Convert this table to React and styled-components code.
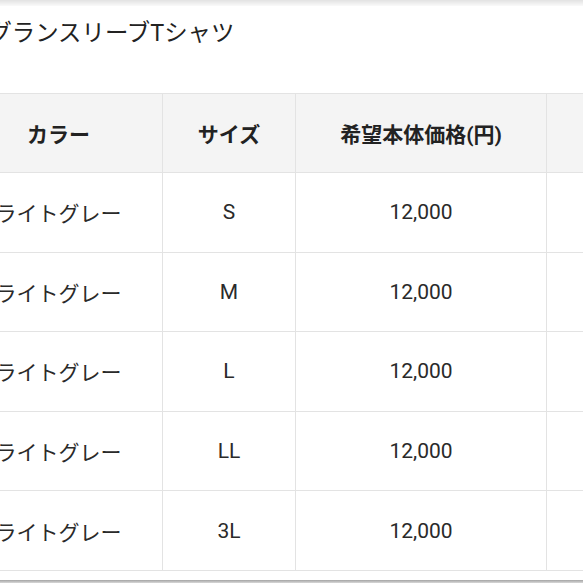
import React from "react";
import styled, { createGlobalStyle } from "styled-components";

const GlobalStyle = createGlobalStyle`
  html, body {
    margin: 0;
    padding: 0;
    background: #fff;
    overflow: hidden;
  }
  body {
    font-family: "Roboto", "Noto Sans CJK JP", sans-serif;
    color: #222;
  }
`;

const Page = styled.div`
  width: 583px;
  height: 583px;
  display: flex;
  flex-direction: column;
  overflow: hidden;
`;

const TopShade = styled.div`
  height: 6px;
  flex-shrink: 0;
  background: linear-gradient(#e2e2e2, #fafafa);
`;

const Title = styled.h1`
  margin: 0 0 0 -35px;
  height: 87px;
  flex-shrink: 0;
  font-size: 23.4px;
  font-weight: 400;
  line-height: 1;
  padding-top: 16px;
  box-sizing: border-box;
  color: #222;
  white-space: nowrap;
`;

const Table = styled.table`
  margin-left: -46px;
  border-collapse: collapse;
  table-layout: fixed;
  width: 712px;
  flex-shrink: 0;

  th, td {
    border: 1px solid #e3e3e3;
    text-align: center;
    font-size: 21px;
    padding: 0;
  }
`;

const HeadCell = styled.th`
  height: 78px;
  background: #f4f4f4;
  font-weight: 700;
  color: #222;
`;

const Cell = styled.td`
  height: 78.6px;
  font-weight: 400;
  color: #2a2a2a;
`;

const BottomBar = styled.div`
  margin-top: auto;
  height: 3px;
  background: linear-gradient(#a4a4a4, #d8d8d8);
`;

const rows = ["S", "M", "L", "LL", "3L"];

export default function App() {
  return (
    <>
      <GlobalStyle />
      <Page>
        <TopShade />
        <Title>ラグランスリーブTシャツ</Title>
        <Table>
          <colgroup>
            <col style={{ width: 208 }} />
            <col style={{ width: 133 }} />
            <col style={{ width: 251 }} />
            <col style={{ width: 120 }} />
          </colgroup>
          <thead>
            <tr>
              <HeadCell>カラー</HeadCell>
              <HeadCell>サイズ</HeadCell>
              <HeadCell>希望本体価格(円)</HeadCell>
              <HeadCell />
            </tr>
          </thead>
          <tbody>
            {rows.map((size) => (
              <tr key={size}>
                <Cell>ライトグレー</Cell>
                <Cell>{size}</Cell>
                <Cell>12,000</Cell>
                <Cell />
              </tr>
            ))}
          </tbody>
        </Table>
        <BottomBar />
      </Page>
    </>
  );
}
